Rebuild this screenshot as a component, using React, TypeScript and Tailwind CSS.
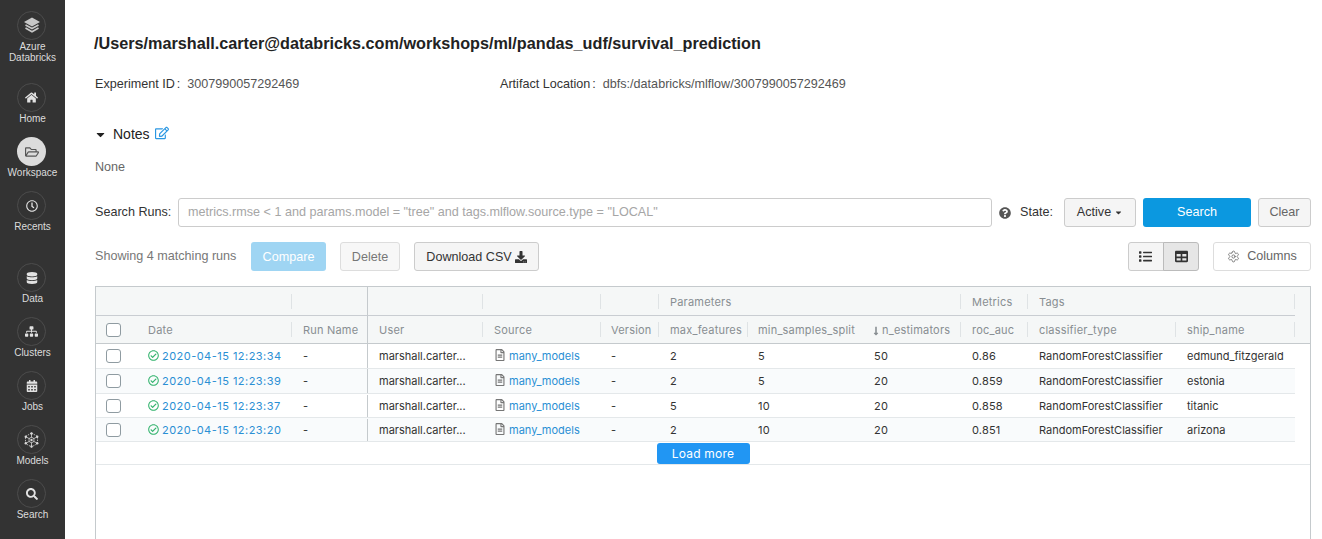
import type { ReactNode } from "react"
import {
  FaCalendarAlt,
  FaCaretDown,
  FaDatabase,
  FaDownload,
  FaHome,
  FaList,
  FaLongArrowAltDown,
  FaQuestionCircle,
  FaRegCheckCircle,
  FaRegClock,
  FaRegEdit,
  FaRegFileAlt,
  FaRegFolderOpen,
  FaSearch,
  FaSitemap,
  FaTable,
} from "react-icons/fa"
import { Settings } from "lucide-react"

const COLS =
  "grid grid-cols-[45px_151px_76px_115px_118px_58px_89px_115px_98px_67px_148px_119px]"

const runs = [
  { date: "2020-04-15 12:23:34", max: "2", min: "5", est: "50", roc: "0.86", ship: "edmund_fitzgerald", h: "h-[25px]" },
  { date: "2020-04-15 12:23:39", max: "2", min: "5", est: "20", roc: "0.859", ship: "estonia", h: "h-[25px]" },
  { date: "2020-04-15 12:23:37", max: "5", min: "10", est: "20", roc: "0.858", ship: "titanic", h: "h-[24px] pt-px" },
  { date: "2020-04-15 12:23:20", max: "2", min: "10", est: "20", roc: "0.851", ship: "arizona", h: "h-[24px] pt-px" },
]

const LogoIcon = () => (
  <svg width="16" height="17" viewBox="0 0 16 17" fill="none" stroke="#c8c8c8" strokeWidth="1.6">
    <path d="M8 1.5 14.5 5 8 8.5 1.5 5Z" fill="#c8c8c8" />
    <path d="M1.5 8 8 11.5 14.5 8" />
    <path d="M1.5 11 8 14.8 14.5 11" />
  </svg>
)

const ModelsIcon = () => (
  <svg width="15" height="16" viewBox="0 0 15 16" fill="none" stroke="#d8d8d8" strokeWidth="0.8">
    <path d="M7.5 1 13.5 4.5V11.5L7.5 15 1.5 11.5V4.5Z" strokeDasharray="1.5 1" />
    <path d="M7.5 1V15M1.5 4.5 13.5 11.5M13.5 4.5 1.5 11.5" />
    <circle cx="7.5" cy="8" r="2.6" fill="#333" />
    <g fill="#d8d8d8" stroke="none">
      <circle cx="7.5" cy="1.5" r="1.2" />
      <circle cx="7.5" cy="14.5" r="1.2" />
      <circle cx="1.8" cy="4.7" r="1.2" />
      <circle cx="13.2" cy="4.7" r="1.2" />
      <circle cx="1.8" cy="11.3" r="1.2" />
      <circle cx="13.2" cy="11.3" r="1.2" />
      <circle cx="7.5" cy="8" r="1.2" />
    </g>
  </svg>
)

const NavItem = ({ label, icon, active }: { label: ReactNode; icon: ReactNode; active?: boolean }) => (
  <div className="flex flex-col items-center">
    <div
      className={
        active
          ? "mr-[2px] flex h-[29px] w-[29px] items-center justify-center rounded-full bg-[#dcdcdc] text-[#555]"
          : "mr-[2px] flex h-[29px] w-[29px] items-center justify-center rounded-full border border-[#4c4c4c] text-[#e2e2e2]"
      }
    >
      {icon}
    </div>
    <div className="mt-[1px] text-center text-[10px] leading-[11px] text-[#dcdcdc]">{label}</div>
  </div>
)

const Sidebar = () => (
  <div className="flex w-[65px] shrink-0 flex-col bg-[#333333] pt-[11px]">
    <div className="mb-[20px]">
      <NavItem
        icon={<LogoIcon />}
        label={
          <>
            Azure
            <br />
            Databricks
          </>
        }
      />
    </div>
    <div className="flex flex-col gap-[13px]">
      <NavItem icon={<FaHome size={13} />} label="Home" />
      <NavItem active icon={<FaRegFolderOpen size={14} />} label="Workspace" />
      <NavItem icon={<FaRegClock size={12} />} label="Recents" />
    </div>
    <div className="mt-[31px] flex flex-col gap-[13px]">
      <NavItem icon={<FaDatabase size={12} />} label="Data" />
      <NavItem icon={<FaSitemap size={13} />} label="Clusters" />
      <NavItem icon={<FaCalendarAlt size={12} />} label="Jobs" />
      <NavItem icon={<ModelsIcon />} label="Models" />
      <NavItem icon={<FaSearch size={12} />} label="Search" />
    </div>
  </div>
)

// header cell with the short separator on its right edge
const HeadCell = ({ children, sep = true, pl = "pl-[11px]" }: { children?: ReactNode; sep?: boolean; pl?: string }) => (
  <div className="flex h-full items-center">
    <div
      className={`h-[15px] flex-1 truncate leading-[17px] ${pl} ${sep ? "border-r border-[#dfe3e5]" : ""}`}
    >
      {children}
    </div>
  </div>
)

const Checkbox = () => (
  <div className="ml-[10px] h-[14px] w-[15px] rounded-[3px] border border-[#8f9ba1] bg-white" />
)

const RunsTable = () => (
  <div className="flex-1 border border-b-0 border-[#c5cacd] font-['Inter',sans-serif] text-[11px] tracking-[0.2px]">
    <div className="bg-[#f5f7f7] text-[#888e92]">
      <div className={`${COLS} h-[29px]`}>
        <div className="col-span-2 h-full border-b border-[#c9cdd2]">
          <HeadCell />
        </div>
        <div className="h-full border-r border-b border-r-[#c5cacd] border-b-[#c9cdd2]" />
        <div className="h-full border-b border-[#c9cdd2]">
          <HeadCell />
        </div>
        <div className="h-full border-b border-[#c9cdd2]">
          <HeadCell />
        </div>
        <div className="h-full border-b border-[#c9cdd2]">
          <HeadCell />
        </div>
        <div className="col-span-3 h-full border-b border-[#c9cdd2]">
          <HeadCell>Parameters</HeadCell>
        </div>
        <div className="h-full border-b border-[#c9cdd2]">
          <HeadCell>Metrics</HeadCell>
        </div>
        <div className="col-span-2 h-full border-b border-[#c9cdd2]">
          <HeadCell>Tags</HeadCell>
        </div>
      </div>
      <div className={`${COLS} h-[28px] border-b border-[#c5cacd]`}>
        <div className="flex h-full items-center">
          <Checkbox />
        </div>
        <HeadCell pl="pl-[7px]">Date</HeadCell>
        <div className="flex h-full items-center border-r border-[#c5cacd] pt-px">
          <div className="pl-[11px]">Run Name</div>
        </div>
        <HeadCell>User</HeadCell>
        <HeadCell>Source</HeadCell>
        <HeadCell pl="pl-[10px]">Version</HeadCell>
        <HeadCell>max_features</HeadCell>
        <HeadCell pl="pl-[10px]" sep={false}>min_samples_split</HeadCell>
        <HeadCell pl="pl-[8px]">
          <span className="inline-flex items-center gap-[1px]">
            <FaLongArrowAltDown size={10} />
            n_estimators
          </span>
        </HeadCell>
        <HeadCell>roc_auc</HeadCell>
        <HeadCell>classifier_type</HeadCell>
        <HeadCell>ship_name</HeadCell>
      </div>
    </div>
    {runs.map((run, i) => (
      <div
        key={run.date}
        className={`${COLS} ${run.h} w-[1199px] items-center border-b border-[#e4e8ea] text-[#333] ${i % 2 ? "bg-[#f9fbfc]" : "bg-white"}`}
      >
        <div className="flex items-center">
          <Checkbox />
        </div>
        <div className="flex items-center gap-[3px] pl-[7px] tracking-[0.47px] text-[#2a8fd4]">
          <FaRegCheckCircle size={11} className="mb-px text-[#35b46f]" />
          {run.date}
        </div>
        <div className="flex h-full items-center border-r border-[#c5cacd] pl-[11px]">-</div>
        <div className="pl-[11px] tracking-normal">marshall.carter...</div>
        <div className="flex items-center gap-[3px] pl-[11px] tracking-normal text-[#2a8fd4]">
          <FaRegFileAlt size={12} className="mb-[2px] text-[#777]" />
          many_models
        </div>
        <div className="pl-[10px]">-</div>
        <div className="pl-[11px]">{run.max}</div>
        <div className="pl-[10px]">{run.min}</div>
        <div className="pl-[11px]">{run.est}</div>
        <div className="pl-[11px]">{run.roc}</div>
        <div className="pl-[11px] tracking-normal">RandomForestClassifier</div>
        <div className="pl-[11px] tracking-normal">{run.ship}</div>
      </div>
    ))}
    <div className="flex h-[23px] items-center justify-center border-b border-[#e4e8ea] pt-px">
      <button className="h-[21px] w-[93px] rounded-[3px] bg-[#2196f3] text-[12px] leading-[20px] tracking-[0.2px] text-white">
        Load more
      </button>
    </div>
  </div>
)

export default function App() {
  return (
    <div className="flex h-screen overflow-hidden bg-white font-['Liberation_Sans',sans-serif] text-[12.6px] text-[#333]">
      <Sidebar />
      <div className="flex min-w-0 flex-1 flex-col pt-[33px] pr-[11px] pl-[30px]">
        <h1 className="-ml-px text-[16.22px] leading-5 font-bold text-[#222]">
          /Users/marshall.carter@databricks.com/workshops/ml/pandas_udf/survival_prediction
        </h1>

        <div className="mt-[21px] flex h-5 items-center">
          <div className="flex w-[405px] items-center">
            <span>Experiment ID</span>
            <span className="mr-[7px] ml-[2px]">:</span>
            <span className="text-[#555]">3007990057292469</span>
          </div>
          <span>Artifact Location</span>
          <span className="mr-[7px] ml-[2px]">:</span>
          <span className="text-[#555]">dbfs:/databricks/mlflow/3007990057292469</span>
        </div>

        <div className="mt-[30px] flex h-5 items-center">
          <FaCaretDown size={13} className="-ml-px text-[#222]" />
          <span className="ml-[6px] text-[14px] text-[#222]">Notes</span>
          <FaRegEdit size={14} className="mb-[2px] ml-[5px] text-[#2b97e2]" />
        </div>
        <div className="mt-[13px] flex h-5 items-center text-[#666]">None</div>

        <div className="mt-[21px] flex h-[29px] items-center">
          <span className="w-[83px] shrink-0 pb-px">Search Runs:</span>
          <div className="flex h-full w-[814px] items-center rounded-[3px] border border-[#ccc] pb-px pl-[9px] text-[#a6a6a6]">
            metrics.rmse &lt; 1 and params.model = "tree" and tags.mlflow.source.type = "LOCAL"
          </div>
          <FaQuestionCircle size={12} className="ml-[7px] text-[#555]" />
          <span className="ml-[9px] w-[34px] shrink-0 pb-px">State:</span>
          <button className="ml-[10px] flex h-full w-[72px] items-center justify-center gap-[3px] rounded-[3px] border border-[#ccc] bg-[#f5f5f5]">
            Active
            <FaCaretDown size={9} />
          </button>
          <button className="ml-[7px] h-full w-[108px] rounded-[3px] bg-[#0b98e0] text-white">Search</button>
          <button className="ml-[7px] h-full w-[53px] rounded-[3px] border border-[#ccc] bg-[#f5f5f5] text-[#666]">Clear</button>
        </div>

        <div className="mt-[15px] flex h-[29px] items-center">
          <span className="w-[156px] shrink-0 pb-px text-[#777]">Showing 4 matching runs</span>
          <button className="h-full w-[75px] rounded-[3px] bg-[#9fd5f3] pt-px text-white">Compare</button>
          <button className="ml-[14px] h-full w-[60px] rounded-[3px] border border-[#ddd] bg-[#f7f7f7] pt-px text-[#777]">Delete</button>
          <button className="ml-[14px] flex h-full w-[125px] items-center justify-center gap-[3px] rounded-[3px] border border-[#ccc] bg-[#f5f5f5] pt-px">
            Download CSV
            <FaDownload size={12} />
          </button>
          <div className="ml-auto flex h-full">
            <button className="flex h-full w-[36px] items-center justify-center rounded-l-[3px] border border-[#ccc] bg-[#f5f5f5] pr-px">
              <FaList size={13} />
            </button>
            <button className="-ml-px flex h-full w-[36px] items-center justify-center rounded-r-[3px] border border-[#bbb] bg-[#e6e6e6]">
              <FaTable size={13} />
            </button>
          </div>
          <button className="ml-[14px] flex h-full w-[98px] items-center justify-center gap-[7px] rounded-[3px] border border-[#ddd] bg-white text-[#666]">
            <Settings size={13} strokeWidth={1.5} />
            Columns
          </button>
        </div>

        <div className="mt-[15px] flex flex-1">
          <RunsTable />
        </div>
      </div>
    </div>
  )
}
